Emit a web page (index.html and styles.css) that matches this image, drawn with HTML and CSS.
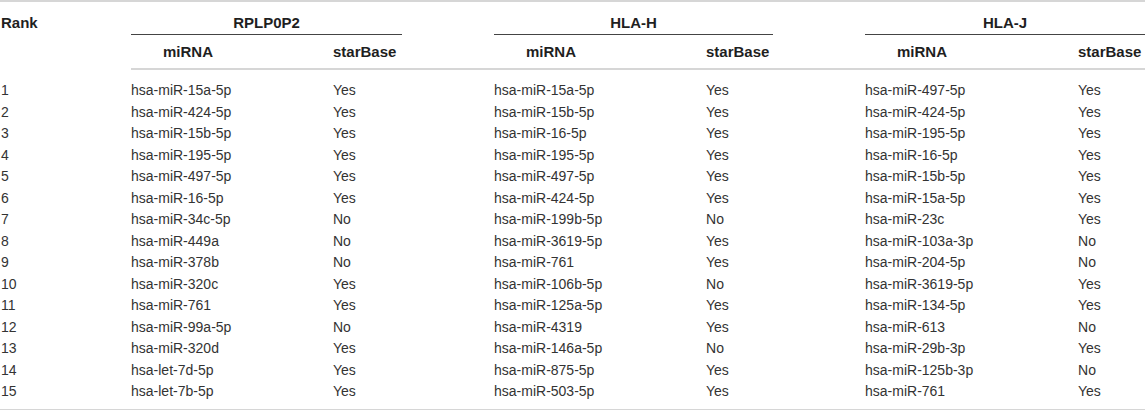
FILE: index.html
```html
<!DOCTYPE html>
<html>
<head>
<meta charset="utf-8">
<link rel="stylesheet" href="styles.css">
</head>
<body>
<table class="mirna-table">
  <colgroup>
    <col class="c-rank">
    <col class="c-mi1">
    <col class="c-sb1">
    <col class="c-mi2">
    <col class="c-sb2">
    <col class="c-mi3">
    <col class="c-sb3">
  </colgroup>
  <thead>
    <tr class="group-row">
      <th class="rank-head" rowspan="2">Rank</th>
      <th class="group" colspan="2"><div class="group-label">RPLP0P2</div></th>
      <th class="group" colspan="2"><div class="group-label">HLA-H</div></th>
      <th class="group group-last" colspan="2"><div class="group-label">HLA-J</div></th>
    </tr>
    <tr class="sub-row">
      <th class="mi-head">miRNA</th><th class="sb-head">starBase</th>
      <th class="mi-head">miRNA</th><th class="sb-head">starBase</th>
      <th class="mi-head">miRNA</th><th class="sb-head">starBase</th>
    </tr>
  </thead>
  <tbody>
    <tr><td>1</td><td>hsa-miR-15a-5p</td><td>Yes</td><td>hsa-miR-15a-5p</td><td>Yes</td><td>hsa-miR-497-5p</td><td>Yes</td></tr>
    <tr><td>2</td><td>hsa-miR-424-5p</td><td>Yes</td><td>hsa-miR-15b-5p</td><td>Yes</td><td>hsa-miR-424-5p</td><td>Yes</td></tr>
    <tr><td>3</td><td>hsa-miR-15b-5p</td><td>Yes</td><td>hsa-miR-16-5p</td><td>Yes</td><td>hsa-miR-195-5p</td><td>Yes</td></tr>
    <tr><td>4</td><td>hsa-miR-195-5p</td><td>Yes</td><td>hsa-miR-195-5p</td><td>Yes</td><td>hsa-miR-16-5p</td><td>Yes</td></tr>
    <tr><td>5</td><td>hsa-miR-497-5p</td><td>Yes</td><td>hsa-miR-497-5p</td><td>Yes</td><td>hsa-miR-15b-5p</td><td>Yes</td></tr>
    <tr><td>6</td><td>hsa-miR-16-5p</td><td>Yes</td><td>hsa-miR-424-5p</td><td>Yes</td><td>hsa-miR-15a-5p</td><td>Yes</td></tr>
    <tr><td>7</td><td>hsa-miR-34c-5p</td><td>No</td><td>hsa-miR-199b-5p</td><td>No</td><td>hsa-miR-23c</td><td>Yes</td></tr>
    <tr><td>8</td><td>hsa-miR-449a</td><td>No</td><td>hsa-miR-3619-5p</td><td>Yes</td><td>hsa-miR-103a-3p</td><td>No</td></tr>
    <tr><td>9</td><td>hsa-miR-378b</td><td>No</td><td>hsa-miR-761</td><td>Yes</td><td>hsa-miR-204-5p</td><td>No</td></tr>
    <tr><td>10</td><td>hsa-miR-320c</td><td>Yes</td><td>hsa-miR-106b-5p</td><td>No</td><td>hsa-miR-3619-5p</td><td>Yes</td></tr>
    <tr><td>11</td><td>hsa-miR-761</td><td>Yes</td><td>hsa-miR-125a-5p</td><td>Yes</td><td>hsa-miR-134-5p</td><td>Yes</td></tr>
    <tr><td>12</td><td>hsa-miR-99a-5p</td><td>No</td><td>hsa-miR-4319</td><td>Yes</td><td>hsa-miR-613</td><td>No</td></tr>
    <tr><td>13</td><td>hsa-miR-320d</td><td>Yes</td><td>hsa-miR-146a-5p</td><td>No</td><td>hsa-miR-29b-3p</td><td>Yes</td></tr>
    <tr><td>14</td><td>hsa-let-7d-5p</td><td>Yes</td><td>hsa-miR-875-5p</td><td>Yes</td><td>hsa-miR-125b-3p</td><td>No</td></tr>
    <tr><td>15</td><td>hsa-let-7b-5p</td><td>Yes</td><td>hsa-miR-503-5p</td><td>Yes</td><td>hsa-miR-761</td><td>Yes</td></tr>
  </tbody>
</table>
</body>
</html>
```
FILE: styles.css
```css
html, body {
  margin: 0;
  padding: 0;
  background: #ffffff;
}

.mirna-table {
  border-collapse: collapse;
  table-layout: fixed;
  width: 1145px;
  font-family: "Liberation Sans", Arial, Helvetica, sans-serif;
  font-size: 14px;
  color: #333333;
  border-top: 2px solid #d6d6d6;
  border-bottom: 2px solid #d6d6d6;
}

.c-rank { width: 131px; }
.c-mi1 { width: 202px; }
.c-sb1 { width: 161px; }
.c-mi2 { width: 212px; }
.c-sb2 { width: 159px; }
.c-mi3 { width: 213px; }
.c-sb3 { width: 67px; }

.mirna-table th {
  font-weight: bold;
  font-size: 15px;
  color: #1f1f1f;
  text-align: left;
  line-height: 17px;
  padding: 0;
}

.mirna-table th,
.mirna-table td {
  white-space: nowrap;
}

.rank-head {
  vertical-align: top;
  padding: 12px 0 0 1px !important;
}

.group {
  padding: 12px 92px 0 0 !important;
  vertical-align: top;
}

.group-last {
  padding-right: 0 !important;
}

.group-label {
  text-align: center;
  padding-bottom: 3px;
  border-bottom: 1px solid #444444;
}

.sub-row th {
  padding: 8px 0 8px 0;
  border-bottom: 2px solid #d6d6d6;
}

.sub-row .mi-head {
  padding-left: 32px;
}

.mirna-table td {
  padding: 0;
  line-height: 21.5px;
  height: 21.5px;
}

.mirna-table td:first-child {
  padding-left: 1px;
}

.mirna-table tbody tr:first-child td {
  padding-top: 10px;
}

.mirna-table tbody tr:last-child td {
  padding-bottom: 6px;
}
```
